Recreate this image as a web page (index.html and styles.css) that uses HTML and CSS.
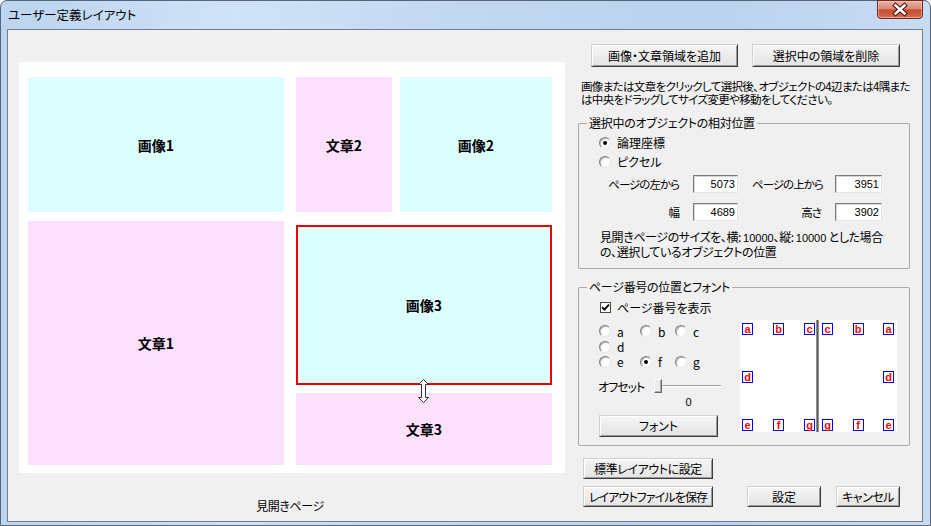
FILE: index.html
```html
<!DOCTYPE html>
<html lang="ja">
<head>
<meta charset="utf-8">
<title>ユーザー定義レイアウト</title>
<link rel="stylesheet" href="styles.css">
</head>
<body>
<div class="window">
  <div class="titlebar">
    <span class="title">ユーザー定義レイアウト</span>
    <button class="close" aria-label="閉じる">
      <svg width="46" height="19" viewBox="0 0 46 19">
        <path d="M18.5 5.5 L27.5 13.5 M27.5 5.5 L18.5 13.5" stroke="#4a1a14" stroke-width="4.6" stroke-linecap="square" fill="none"/>
        <path d="M18.5 5.5 L27.5 13.5 M27.5 5.5 L18.5 13.5" stroke="#ffffff" stroke-width="2.4" stroke-linecap="square" fill="none"/>
      </svg>
    </button>
  </div>
  <div class="client">
    <div class="left">
      <div class="canvas">
        <div class="obj img" style="left:9px;top:15px;width:256px;height:135px">画像1</div>
        <div class="obj txt" style="left:277px;top:15px;width:96px;height:135px">文章2</div>
        <div class="obj img" style="left:381px;top:15px;width:152px;height:135px">画像2</div>
        <div class="obj txt" style="left:9px;top:159px;width:256px;height:244px">文章1</div>
        <div class="obj img sel" style="left:277px;top:163px;width:256px;height:160px">画像3</div>
        <div class="obj txt" style="left:277px;top:331px;width:256px;height:72px">文章3</div>
        <svg class="cursor" width="11" height="24" viewBox="0 0 11 24">
          <path d="M5.5 0.5 L10.5 5.5 L7.5 5.5 L7.5 18.5 L10.5 18.5 L5.5 23.5 L0.5 18.5 L3.5 18.5 L3.5 5.5 L0.5 5.5 Z" fill="#ffffff" stroke="#333333" stroke-width="1"/>
        </svg>
      </div>
      <div class="caption">見開きページ</div>
    </div>
    <div class="right">
      <div class="top-row">
        <button class="btn add">画像・文章領域を追加</button>
        <button class="btn del">選択中の領域を削除</button>
      </div>
      <p class="desc">画像または文章をクリックして選択後、オブジェクトの4辺または4隅また<br>は中央をドラッグしてサイズ変更や移動をしてください。</p>
      <fieldset class="group g1">
        <legend>選択中のオブジェクトの相対位置</legend>
        <div class="radio-list">
          <label class="radio"><span class="rb on"></span>論理座標</label>
          <label class="radio"><span class="rb"></span>ピクセル</label>
        </div>
        <div class="fields">
          <span class="lbl">ページの左から</span><span class="input">5073</span>
          <span class="lbl">ページの上から</span><span class="input">3951</span>
          <span class="lbl">幅</span><span class="input">4689</span>
          <span class="lbl">高さ</span><span class="input">3902</span>
        </div>
        <p class="note">見開きページのサイズを、横:<span class="num">10000</span>、縦:<span class="num">10000</span> とした場合<br>の、選択しているオブジェクトの位置</p>
      </fieldset>
      <fieldset class="group g2">
        <legend>ページ番号の位置とフォント</legend>
        <label class="check"><span class="cb"><svg width="9" height="9" viewBox="0 0 9 9"><path d="M1 4.2 L3.4 6.6 L8 1.6" stroke="#000" stroke-width="1.8" fill="none"/></svg></span>ページ番号を表示</label>
        <div class="g2-body">
          <div class="controls">
            <div class="pos-grid">
              <label class="radio"><span class="rb"></span>a</label>
              <label class="radio"><span class="rb"></span>b</label>
              <label class="radio"><span class="rb"></span>c</label>
              <label class="radio"><span class="rb"></span>d</label>
              <span></span><span></span>
              <label class="radio"><span class="rb"></span>e</label>
              <label class="radio"><span class="rb on"></span>f</label>
              <label class="radio"><span class="rb"></span>g</label>
            </div>
            <div class="offset">
              <span class="offset-lbl">オフセット</span>
              <div class="slider"><span class="thumb"></span></div>
            </div>
            <div class="offset-val">0</div>
            <button class="btn font-btn">フォント</button>
          </div>
          <div class="preview">
            <div class="page pl">
              <span class="pn">a</span><span class="pn">b</span><span class="pn">c</span>
              <span class="pn">d</span><span></span><span></span>
              <span class="pn">e</span><span class="pn">f</span><span class="pn">g</span>
            </div>
            <div class="spine"></div>
            <div class="page pr">
              <span class="pn">c</span><span class="pn">b</span><span class="pn">a</span>
              <span></span><span></span><span class="pn">d</span>
              <span class="pn">g</span><span class="pn">f</span><span class="pn">e</span>
            </div>
          </div>
        </div>
      </fieldset>
      <div class="bottom">
        <button class="btn std">標準レイアウトに設定</button>
        <div class="bottom-row">
          <button class="btn save">レイアウトファイルを保存</button>
          <button class="btn ok">設定</button>
          <button class="btn cancel">キャンセル</button>
        </div>
      </div>
    </div>
  </div>
</div>
</body>
</html>
```
FILE: styles.css
```css
* { box-sizing: border-box; }
html, body { margin: 0; padding: 0; }
body {
  width: 931px;
  height: 526px;
  overflow: hidden;
  background: #ffffff;
  font-family: "Noto Sans CJK JP", "Noto Sans", sans-serif;
  font-size: 12px;
  color: #000;
  font-feature-settings: "palt" 1;
}
.window {
  width: 931px;
  height: 526px;
  border: 1px solid #56657a;
  border-radius: 7px 7px 0 0;
  background: linear-gradient(to right, #bcd4ef 0%, #cfe2f7 25%, #c2d8f1 50%, #bad2ee 75%, #c8dcf3 100%);
  padding: 0 7px 3px 6px;
  display: flex;
  flex-direction: column;
}
.titlebar {
  height: 28px;
  display: flex;
  align-items: center;
  justify-content: space-between;
}
.title {
  margin-left: 1px;
  line-height: 14px;
  font-size: 12.5px;
}
.close {
  align-self: flex-start;
  width: 46px;
  height: 19px;
  margin-top: -1px;
  padding: 0;
  border: 1px solid #6b2a22;
  border-radius: 0 0 4px 4px;
  background: linear-gradient(#eab0a2 0%, #d98a77 45%, #c44d36 52%, #cc5b40 80%, #d9795c 100%);
  box-shadow: inset 0 0 0 1px rgba(255, 210, 200, 0.5);
  display: block;
}
.close svg { display: block; margin: -1px 0 0 -1px; }
.client {
  flex: 1;
  border: 1px solid #6f7e90;
  background: #f0f0f0;
  display: flex;
}
.left {
  margin: 32px 0 0 11px;
  width: 546px;
}
.canvas {
  position: relative;
  width: 546px;
  height: 411px;
  background: #ffffff;
}
.obj {
  position: absolute;
  display: flex;
  align-items: center;
  justify-content: center;
  font-weight: 700;
  font-size: 14px;
}
.img { background: #dcfefe; }
.txt { background: #fde0fc; }
.sel { border: 2px solid #ee0000; }
.cursor {
  position: absolute;
  left: 399px;
  top: 317px;
}
.caption {
  margin-top: 26px;
  text-align: center;
  line-height: 14px;
  padding-right: 4px;
  letter-spacing: -0.4px;
}
.right {
  margin: 14px 0 0 13px;
  width: 332px;
}
.btn {
  font-family: inherit;
  font-size: 12px;
  color: #000;
  padding: 0;
  height: 22px;
  border: 1px solid;
  border-color: #d0d0d0 #3c3c3c #3c3c3c #d0d0d0;
  box-shadow: inset 1px 1px 0 #ffffff, inset -1px -1px 0 #9a9a9a;
  background: linear-gradient(#f6f6f6, #e3e3e3);
  line-height: 18px;
  white-space: nowrap;
  font-feature-settings: "palt" 1;
}
.top-row {
  display: flex;
  gap: 14px;
  margin-left: 13px;
}
.top-row .btn { height: 23px; }
.add { width: 147px; }
.del { width: 148px; }
.desc {
  margin: 13px 0 0 3px;
  line-height: 13px;
  white-space: nowrap;
  font-size: 11.5px;
  letter-spacing: -0.65px;
}
.group {
  margin: 0;
  border: 1px solid #a9a9a9;
  border-radius: 2px;
  padding: 0 11px 0 20px;
  min-width: 0;
}
.group legend {
  margin-left: -12px;
  padding: 0 2px;
  line-height: 14px;
  letter-spacing: -0.3px;
}
.g1 {
  margin-top: 10px;
  padding-bottom: 10px;
}
.radio {
  display: flex;
  align-items: center;
}
.rb {
  width: 12px;
  height: 12px;
  flex: none;
  border-radius: 50%;
  background: #ffffff;
  border: 1px solid;
  border-color: #7d7d7d #e6e6e6 #e6e6e6 #7d7d7d;
  box-shadow: inset 1px 1px 0 #b9b9b9;
  display: inline-flex;
  align-items: center;
  justify-content: center;
  margin-right: 6px;
}
.rb.on::after {
  content: "";
  width: 4px;
  height: 4px;
  border-radius: 50%;
  background: #000;
}
.radio-list {
  padding-top: 3px;
  display: grid;
  grid-auto-rows: 19px;
}
.fields {
  margin: 4px 0 0 -20px;
  display: grid;
  grid-template-columns: 100px 45px 69px 47px;
  grid-auto-rows: 18px;
  column-gap: 14px;
  row-gap: 10px;
  align-items: center;
}
.lbl {
  text-align: right;
  white-space: nowrap;
  line-height: 14px;
  font-size: 11.5px;
  letter-spacing: -1px;
}
.input {
  height: 18px;
  background: #ffffff;
  border: 1px solid;
  border-color: #7a7a7a #e3e3e3 #e3e3e3 #7a7a7a;
  box-shadow: inset 1px 1px 0 #d4d4d4;
  text-align: right;
  padding-right: 2px;
  font-family: "Liberation Sans", sans-serif;
  font-size: 11px;
  line-height: 16px;
}
.note {
  margin: 9px 0 0 1px;
  line-height: 13px;
  white-space: nowrap;
  letter-spacing: -0.4px;
}
.num {
  font-family: "Liberation Sans", sans-serif;
  font-size: 11px;
  letter-spacing: 0;
  margin-left: 2px;
}
.g2 {
  margin-top: 11px;
  padding-bottom: 8px;
}
.check {
  display: flex;
  align-items: center;
  height: 14px;
  margin-top: 6px;
}
.cb {
  width: 11px;
  height: 11px;
  margin: 0 6px 0 1px;
  background: #ffffff;
  border: 1px solid #4a4a4a;
  display: inline-flex;
  align-items: center;
  justify-content: center;
}
.cb svg { display: block; }
.g2-body {
  margin-top: 6px;
  display: flex;
  gap: 17px;
}
.controls {
  width: 124px;
  padding-top: 3px;
}
.pos-grid {
  display: grid;
  grid-template-columns: 41px 35px auto;
  grid-template-rows: 16px 15px 15px;
  align-items: center;
}
.offset {
  margin-top: 10px;
  display: flex;
  align-items: center;
  height: 14px;
}
.offset-lbl {
  width: 56px;
  white-space: nowrap;
  margin-left: -1px;
  letter-spacing: -1px;
}
.slider {
  width: 67px;
  height: 14px;
  display: flex;
  align-items: center;
  background: linear-gradient(to bottom, transparent 6px, #a0a0a0 6px, #a0a0a0 7px, #ffffff 7px, #ffffff 8px, transparent 8px);
}
.thumb {
  width: 8px;
  height: 14px;
  background: #ececec;
  border: 1px solid;
  border-color: #ffffff #6a6a6a #6a6a6a #ffffff;
  box-shadow: inset -1px -1px 0 #a8a8a8;
}
.offset-val {
  margin: 2px 0 0 56px;
  width: 67px;
  text-align: center;
  line-height: 14px;
  font-family: "Liberation Sans", sans-serif;
  font-size: 11px;
}
.font-btn {
  margin-top: 6px;
  width: 119px;
  display: block;
}
.preview {
  width: 157px;
  height: 112px;
  background: #ffffff;
  display: flex;
  padding: 0 3px 0 2px;
}
.page {
  display: grid;
  grid-template-columns: repeat(3, 11px);
  grid-template-rows: repeat(3, 12px);
  justify-content: space-between;
  align-content: space-between;
  padding: 3px 0 1px;
}
.pl { width: 73px; }
.pr { width: 72px; }
.spine {
  width: 3px;
  margin: 0 3px 0 1px;
  background: linear-gradient(to right, #a8a8a8, #5c5c5c, #a8a8a8);
}
.pn {
  width: 11px;
  height: 12px;
  border: 1px solid #0000ff;
  color: #ff0000;
  font-family: "Liberation Sans", sans-serif;
  font-weight: 700;
  font-size: 11px;
  line-height: 10px;
  text-align: center;
}
.bottom {
  margin: 12px 0 0 5px;
  display: flex;
  flex-direction: column;
  gap: 7px;
}
.bottom .btn { height: 21px; }
.std { width: 130px; letter-spacing: -0.4px; }
.bottom-row { display: flex; }
.save { width: 130px; letter-spacing: -0.9px; }
.ok { width: 74px; margin-left: 34px; }
.cancel { width: 64px; margin-left: 15px; letter-spacing: -0.5px; }
```
